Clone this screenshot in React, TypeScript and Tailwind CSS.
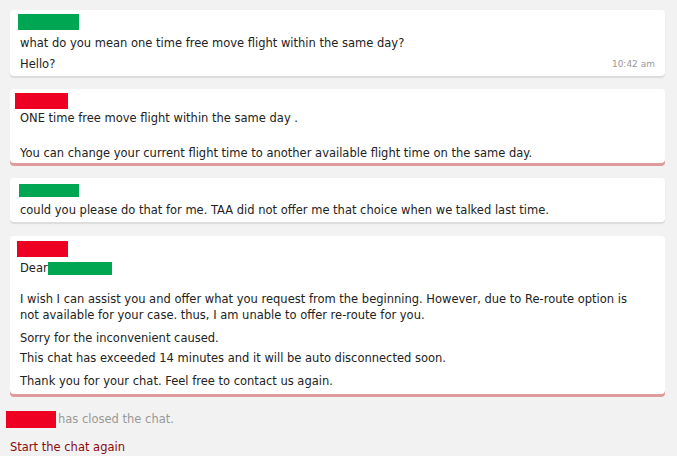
import React from 'react'

const font = { fontFamily: '"DejaVu Sans", Verdana, sans-serif' }

function Card({ agent, children }: { agent?: boolean; children: React.ReactNode }) {
  return (
    <div
      className={
        'bg-white rounded-[4px] px-[10px] text-[#222] ' +
        (agent ? 'shadow-[0_3px_0_#df9a9a]' : 'shadow-[0_2px_1px_#dcdcdc]')
      }
    >
      {children}
    </div>
  )
}

export default function App() {
  return (
    <div className="w-[677px] h-[456px] bg-[#f2f2f2] overflow-hidden text-[11.5px]" style={font}>
      <div className="flex flex-col pt-[10px] pl-[10px] pr-[12px]">
        <Card>
          <div className="pt-[4px] pb-[4px]">
            <div className="w-[61px] h-[16px] bg-[#00a651] ml-[-2px]" />
            <div className="leading-[16px] mt-[5px]">what do you mean one time free move flight within the same day?</div>
            <div className="flex justify-between items-center leading-[16px] mt-[5px]">
              <span>Hello?</span>
              <span className="text-[9px] text-[#999]">10:42 am</span>
            </div>
          </div>
        </Card>

        <div className="h-[13px]" />
        <Card agent>
          <div className="pt-[4px] pb-[2px]">
            <div className="w-[53px] h-[16px] bg-[#ee0022] ml-[-5px]" />
            <div className="leading-[16px] mt-[1px]">ONE time free move flight within the same day .</div>
            <div className="leading-[16px] mt-[19px]">You can change your current flight time to another available flight time on the same day.</div>
          </div>
        </Card>

        <div className="h-[15px]" />
        <Card>
          <div className="pt-[6px] pb-[4px]">
            <div className="w-[60px] h-[13px] bg-[#00a651] ml-[-1px]" />
            <div className="leading-[16px] mt-[5px]">could you please do that for me. TAA did not offer me that choice when we talked last time.</div>
          </div>
        </Card>

        <div className="h-[14px]" />
        <Card agent>
          <div className="pt-[5px] pb-[5px]">
            <div className="w-[51px] h-[16px] bg-[#ee0022] ml-[-3px]" />
            <div className="leading-[16px] mt-[3px] flex items-center">
              Dear<span className="inline-block w-[64px] h-[13px] bg-[#00a651]" />
            </div>
            <div className="leading-[16px] mt-[15px]">
              I wish I can assist you and offer what you request from the beginning. However, due to Re-route option is
              <br />
              not available for your case. thus, I am unable to offer re-route for you.
            </div>
            <div className="leading-[16px] mt-[7px]">Sorry for the inconvenient caused.</div>
            <div className="leading-[16px] mt-[4px]">This chat has exceeded 14 minutes and it will be auto disconnected soon.</div>
            <div className="leading-[16px] mt-[7px]">Thank you for your chat. Feel free to contact us again.</div>
          </div>
        </Card>

        <div className="flex items-center mt-[17px] ml-[-4px] text-[#999]">
          <span className="w-[50px] h-[17px] bg-[#ee0022] mr-[2px]" />
          <span>has closed the chat.</span>
        </div>
        <div className="mt-[11px] text-[#8b0a0a]">Start the chat again</div>
      </div>
    </div>
  )
}
